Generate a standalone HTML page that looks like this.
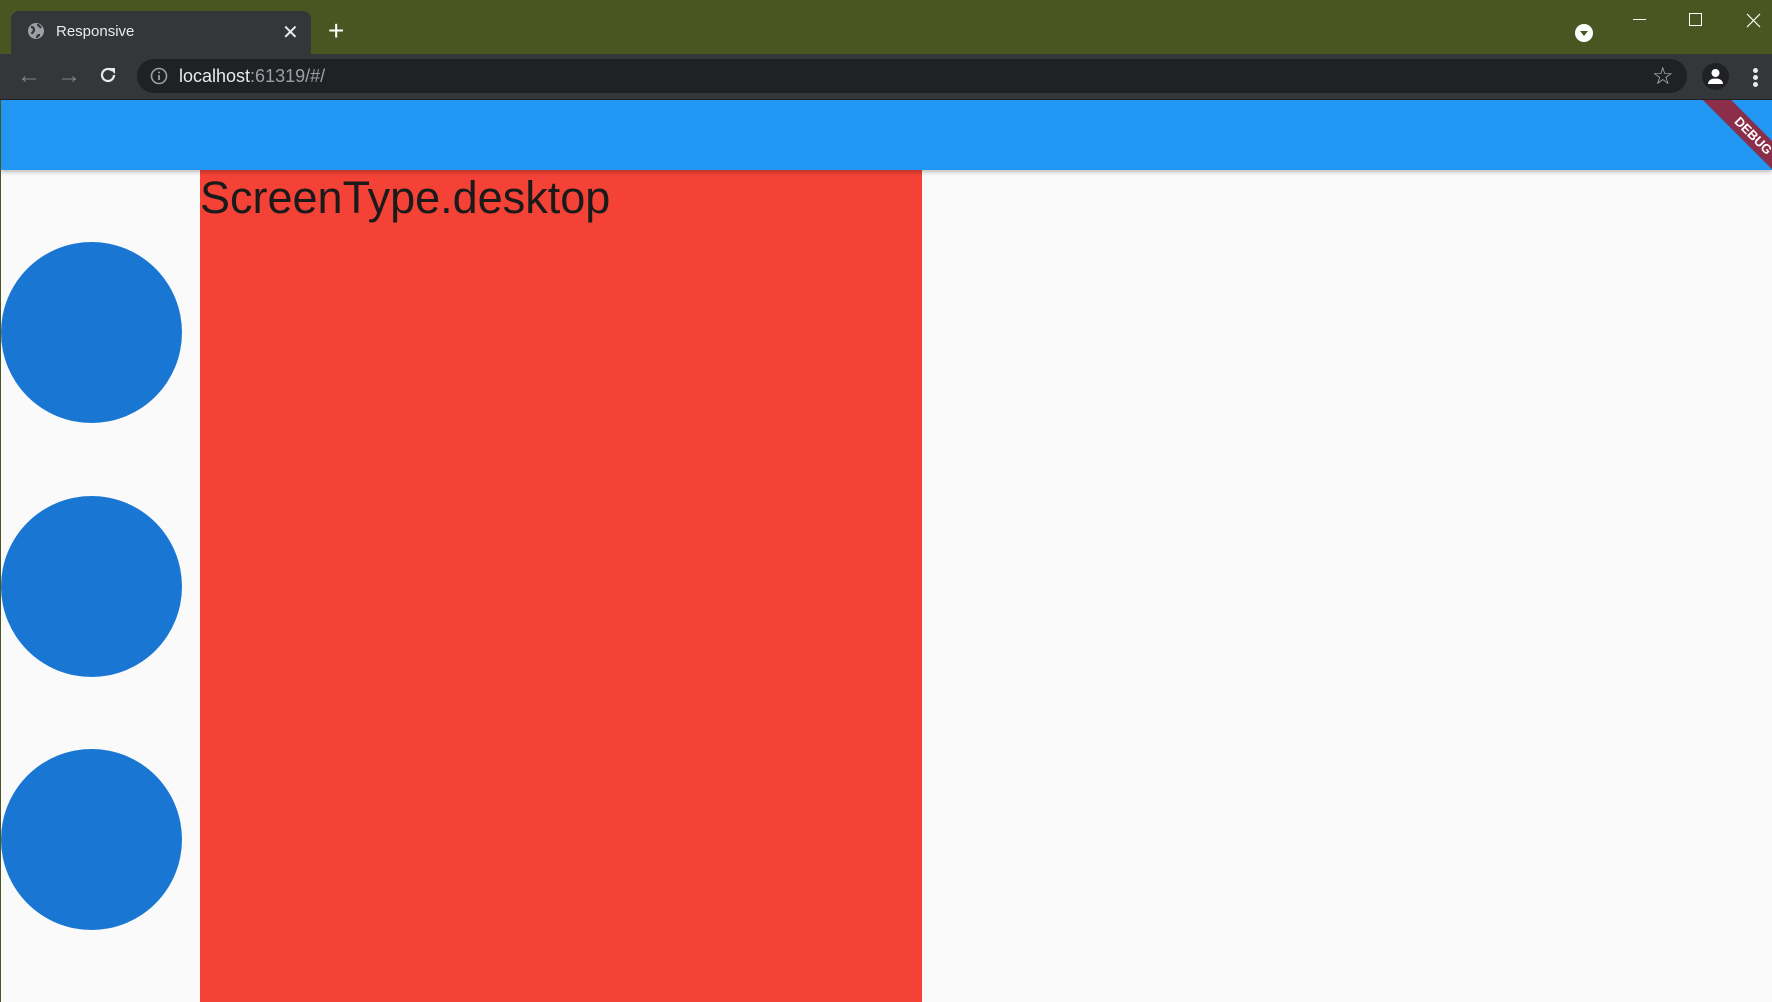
<!DOCTYPE html>
<html><head><style>
*{margin:0;padding:0;box-sizing:border-box}
body{width:1772px;height:1002px;overflow:hidden;background:#4a5622;font-family:"Liberation Sans",sans-serif;position:relative}
.abs{position:absolute}
</style></head><body>
<!-- tab -->
<div class="abs" style="left:11px;top:11px;width:300px;height:44px;background:#35363a;border-radius:8px 8px 0 0"></div>
<svg class="abs" style="left:27px;top:22px" width="18" height="18" viewBox="0 0 18 18"><circle cx="9" cy="9" r="8" fill="#9aa0a6"/><path d="M4 5c2 0 3 1 3 3s-2 2-2 4M11 2c0 2 2 2 3 4M10 16c0-2 1-3 3-3" stroke="#35363a" stroke-width="2.2" fill="none"/></svg>
<div class="abs" style="left:56px;top:23px;color:#e8eaed;font-size:15px">Responsive</div>
<div class="abs" style="left:282px;top:20px;color:#e8eaed;font-size:20px">✕</div>
<div class="abs" style="left:328px;top:17px;color:#fff;font-size:28px;line-height:28px">+</div>
<svg class="abs" style="left:1575px;top:24px" width="18" height="18"><circle cx="9" cy="9" r="9" fill="#fff"/><path d="M5 7h8l-4 5z" fill="#4a5622"/></svg>
<div class="abs" style="left:1633px;top:19px;width:13px;height:1px;background:#fff"></div>
<div class="abs" style="left:1689px;top:13px;width:13px;height:13px;border:1px solid #fff"></div>
<svg class="abs" style="left:1746px;top:13px" width="15" height="15"><path d="M1 1L14 14M14 1L1 14" stroke="#fff" stroke-width="1.2"/></svg>
<!-- toolbar -->
<div class="abs" style="left:0;top:54px;width:1772px;height:46px;background:#35363a;border-bottom:1px solid #202124"></div>
<div class="abs" style="left:17px;top:62px;color:#80868b;font-size:24px">←</div>
<div class="abs" style="left:57px;top:62px;color:#80868b;font-size:24px">→</div>
<svg class="abs" style="left:98px;top:65px" width="20" height="20" viewBox="0 0 20 20"><path d="M16 10a6 6 0 1 1-2-4.5" stroke="#e8eaed" stroke-width="2.2" fill="none"/><path d="M11 3h6v6z" fill="#e8eaed"/></svg>
<div class="abs" style="left:137px;top:59px;width:1550px;height:34px;background:#202124;border-radius:17px"></div>
<svg class="abs" style="left:150px;top:67px" width="18" height="18"><circle cx="9" cy="9" r="7.5" stroke="#9aa0a6" stroke-width="1.6" fill="none"/><path d="M9 8v5" stroke="#9aa0a6" stroke-width="1.8"/><circle cx="9" cy="5.5" r="1" fill="#9aa0a6"/></svg>
<div class="abs" style="left:179px;top:66px;font-size:18px;color:#e8eaed">localhost<span style="color:#9aa0a6">:61319/#/</span></div>
<div class="abs" style="left:1652px;top:62px;color:#bdc1c6;font-size:24px">☆</div>
<div class="abs" style="left:1702px;top:63px;width:27px;height:27px;border-radius:50%;background:#202124"></div>
<svg class="abs" style="left:1705px;top:66px" width="21" height="21"><circle cx="10.5" cy="7" r="4" fill="#fff"/><path d="M3 18c0-4 4-5.5 7.5-5.5S18 14 18 18z" fill="#fff"/></svg>
<div class="abs" style="left:1753px;top:68px;width:5px;height:5px;border-radius:50%;background:#e8eaed;box-shadow:0 7px 0 #e8eaed,0 14px 0 #e8eaed"></div>
<!-- content -->
<div class="abs" style="left:1px;top:100px;width:1771px;height:902px;background:#fafafa;overflow:hidden">
  <div class="abs" style="left:0;top:0;width:1771px;height:70px;background:#2196f3;box-shadow:0 2px 4px rgba(0,0,0,.25);z-index:2"></div>
  <div class="abs" style="left:1682px;top:26px;width:140px;height:20px;background:#8a2e4a;transform:rotate(45deg);color:#fff;font-weight:bold;font-size:13px;text-align:center;line-height:20px;z-index:3">DEBUG</div>
  <div class="abs" style="left:199px;top:70px;width:722px;height:840px;background:#f44336"></div>
  <div class="abs" style="left:199px;top:70px;font-size:45px;color:#1a1a1a;line-height:56px">ScreenType.desktop</div>
  <div class="abs" style="left:0;top:142px;width:181px;height:181px;border-radius:50%;background:#1976d2"></div>
  <div class="abs" style="left:0;top:396px;width:181px;height:181px;border-radius:50%;background:#1976d2"></div>
  <div class="abs" style="left:0;top:649px;width:181px;height:181px;border-radius:50%;background:#1976d2"></div>
</div>
</body></html>
